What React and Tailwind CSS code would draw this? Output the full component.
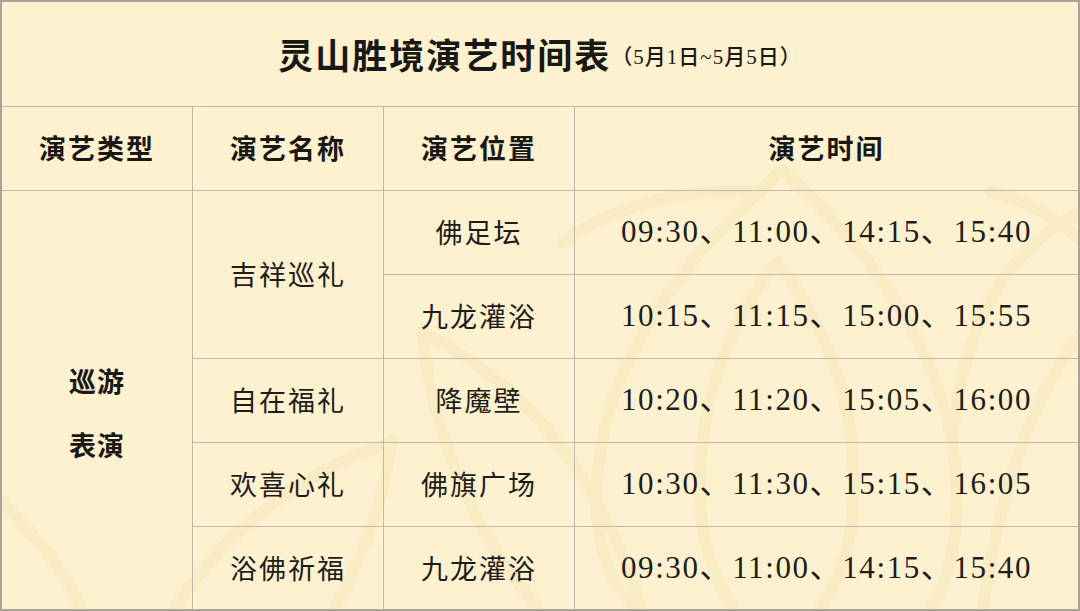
import React from "react";

const FONT = "font-['Liberation_Serif','Noto_Sans_CJK_SC',serif]";
const SANS = "font-['Noto_Sans_CJK_SC',sans-serif]";

function Cell({ className = "", children }) {
  return (
    <div className={`flex items-center justify-center border-[#bfb9ab] ${className}`}>
      {children}
    </div>
  );
}

function Name({ children }) {
  return <span className={`${SANS} text-[27px] tracking-[2px] text-[#1f1d1a]`}>{children}</span>;
}

function Time({ children }) {
  return (
    <span className={`${FONT} text-[31px] tracking-[1.6px] text-[#1f1d1a]`}>{children}</span>
  );
}

function Lotus() {
  return (
    <svg
      className="absolute inset-0 pointer-events-none"
      width="1080"
      height="611"
      viewBox="0 0 1080 611"
      fill="none"
    >
      <g stroke="#f9ebc4" strokeWidth="12" strokeLinecap="round" fill="none">
        <path d="M780 168 C700 240 620 330 600 440 C585 520 600 580 640 611" />
        <path d="M780 168 C860 240 930 330 950 440 C962 520 950 580 925 611" />
        <path d="M775 260 C720 330 690 420 700 520 C705 560 720 590 735 611" />
        <path d="M775 260 C830 330 860 420 850 520 C845 560 830 590 815 611" />
        <path d="M420 330 C520 380 600 470 640 611" />
        <path d="M420 330 C430 430 470 530 540 611" />
        <path d="M1080 210 C1010 240 960 320 950 440" />
        <path d="M1080 330 C1040 380 1000 470 980 611" />
        <path d="M560 240 C620 200 690 185 760 190" />
        <path d="M990 190 C1030 200 1060 220 1080 240" />
        <path d="M390 440 C300 470 220 530 170 611" />
        <path d="M390 440 C380 500 360 560 330 611" />
        <path d="M0 500 C40 540 70 580 80 611" />
      </g>
    </svg>
  );
}

export default function App() {
  return (
    <div className="relative w-[1080px] h-[611px] overflow-hidden border-2 border-[#aaa598] bg-[#fdf1cf]">
      <Lotus />
      <div className="relative flex flex-col h-full">
        <div className="h-[105px] flex items-center justify-center border-b border-[#bfb9ab]">
          <span className={`${SANS} text-[35px] font-bold tracking-[2px] text-[#1a1815]`}>
            灵山胜境演艺时间表
          </span>
          <span className={`${FONT} text-[21px] tracking-[1px] font-medium text-[#1a1815] mt-[8px]`}>
            （5月1日~5月5日）
          </span>
        </div>
        <div className="grid grid-cols-[191px_191px_191px_1fr] grid-rows-[84px_84px_84px_84px_84px_82px]">
          <Cell className="border-r border-b">
            <span className={`${SANS} text-[27px] font-bold tracking-[2px] text-[#1a1815]`}>演艺类型</span>
          </Cell>
          <Cell className="border-r border-b">
            <span className={`${SANS} text-[27px] font-bold tracking-[2px] text-[#1a1815]`}>演艺名称</span>
          </Cell>
          <Cell className="border-r border-b">
            <span className={`${SANS} text-[27px] font-bold tracking-[2px] text-[#1a1815]`}>演艺位置</span>
          </Cell>
          <Cell className="border-b">
            <span className={`${SANS} text-[27px] font-bold tracking-[2px] text-[#1a1815]`}>演艺时间</span>
          </Cell>

          <Cell className="row-span-5 border-r col-start-1 row-start-2">
            <div className={`${SANS} flex flex-col items-center gap-[30px] pt-[26px] text-[27px] font-bold leading-[34px] tracking-[1px] text-[#1a1815]`}>
              <span>巡游</span>
              <span>表演</span>
            </div>
          </Cell>

          <Cell className="row-span-2 border-r border-b col-start-2 row-start-2">
            <Name>吉祥巡礼</Name>
          </Cell>
          <Cell className="border-r border-b col-start-3 row-start-2">
            <Name>佛足坛</Name>
          </Cell>
          <Cell className="border-b col-start-4 row-start-2">
            <Time>09:30、11:00、14:15、15:40</Time>
          </Cell>
          <Cell className="border-r border-b col-start-3 row-start-3">
            <Name>九龙灌浴</Name>
          </Cell>
          <Cell className="border-b col-start-4 row-start-3">
            <Time>10:15、11:15、15:00、15:55</Time>
          </Cell>

          <Cell className="border-r border-b col-start-2 row-start-4">
            <Name>自在福礼</Name>
          </Cell>
          <Cell className="border-r border-b col-start-3 row-start-4">
            <Name>降魔壁</Name>
          </Cell>
          <Cell className="border-b col-start-4 row-start-4">
            <Time>10:20、11:20、15:05、16:00</Time>
          </Cell>

          <Cell className="border-r border-b col-start-2 row-start-5">
            <Name>欢喜心礼</Name>
          </Cell>
          <Cell className="border-r border-b col-start-3 row-start-5">
            <Name>佛旗广场</Name>
          </Cell>
          <Cell className="border-b col-start-4 row-start-5">
            <Time>10:30、11:30、15:15、16:05</Time>
          </Cell>

          <Cell className="border-r col-start-2 row-start-6">
            <Name>浴佛祈福</Name>
          </Cell>
          <Cell className="border-r col-start-3 row-start-6">
            <Name>九龙灌浴</Name>
          </Cell>
          <Cell className="col-start-4 row-start-6">
            <Time>09:30、11:00、14:15、15:40</Time>
          </Cell>
        </div>
      </div>
    </div>
  );
}
